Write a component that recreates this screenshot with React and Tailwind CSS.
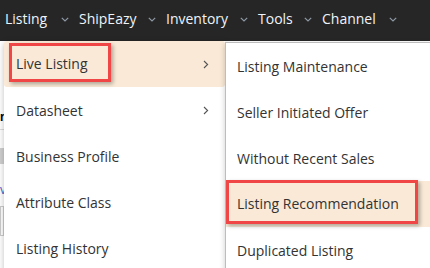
import React from "react";

const font = { fontFamily: '"Open Sans", "Noto Sans", Arial, sans-serif' };

function Chevron() {
  return (
    <svg width="8" height="5" viewBox="0 0 8 5" className="mt-[1px]" fill="none">
      <path d="M0.8 0.8 L4 4 L7.2 0.8" stroke="#8e9aa6" strokeWidth="1.2" />
    </svg>
  );
}

function Right() {
  return (
    <svg width="6" height="9" viewBox="0 0 6 9" fill="none">
      <path d="M1 1 L4.6 4.5 L1 8" stroke="#555" strokeWidth="1.1" />
    </svg>
  );
}

const navItems = [
  { label: "Listing", w: "w-[56px]" },
  { label: "ShipEazy", w: "w-[69px]" },
  { label: "Inventory", w: "w-[74px]" },
  { label: "Tools", w: "w-[46px]" },
  { label: "Channel", w: "w-[67px]" },
];

const rightItems = [
  "Listing Maintenance",
  "Seller Initiated Offer",
  "Without Recent Sales",
  "Listing Recommendation",
  "Duplicated Listing",
];

const redBox = "border-[3px] border-[#f04646] shadow-[2px_2px_4px_rgba(0,0,0,0.3)]";

export default function App() {
  return (
    <div className="w-[430px] h-[268px] overflow-hidden bg-white flex flex-col" style={font}>
      <nav className="h-[41px] shrink-0 bg-[#262626] flex items-center gap-[10px] pl-[5px] pb-[3px]">
        {navItems.map((n) => (
          <div key={n.label} className="flex items-center">
            <span className={`${n.w} text-[14px] text-[#eef4fa] leading-none`}>{n.label}</span>
            <Chevron />
          </div>
        ))}
      </nav>

      <div className="flex flex-1">
        {/* background page fragment */}
        <div className="w-[4px] shrink-0 flex flex-col overflow-hidden pt-[70px] bg-white">
          <div className="h-[14px] text-[12px] font-bold text-black leading-none" style={{ fontFamily: "Arial, sans-serif" }}>r</div>
          <div className="h-px bg-[#ddd] mt-[4px]" />
          <div className="h-[16px] bg-[#cfcfcf] mt-[18px]" />
          <div className="h-[14px] text-[12px] text-[#3366cc] leading-none mt-[20px]">v</div>
          <div className="h-[30px] border border-[#ccc] mt-[8px]" />
        </div>

        {/* left dropdown */}
        <div className="w-[221px] shrink-0 flex flex-col bg-white shadow-[0_2px_6px_rgba(0,0,0,0.25)] rounded-tl-[3px] z-10">
          <div className="h-[46px] bg-[#f9e9d6] rounded-[3px] flex items-start justify-between pt-[2px] pl-[5px] pr-[16px]">
            <div className={`w-[102px] h-[39px] ${redBox} flex items-center pl-[4px] pt-[1px] text-[14px] text-[#333]`}>
              Live Listing
            </div>
            <div className="h-[42px] flex items-center">
              <Right />
            </div>
          </div>
          <div className="h-[46px] flex items-center justify-between pl-[12px] pr-[16px] text-[14px] text-[#333]">
            <span>Datasheet</span>
            <Right />
          </div>
          {["Business Profile", "Attribute Class", "Listing History"].map((t) => (
            <div key={t} className="h-[46px] flex items-center pl-[12px] text-[14px] text-[#333]">
              {t}
            </div>
          ))}
        </div>

        {/* right submenu */}
        <div className="flex-1 mt-px flex flex-col bg-white border-l border-t border-[#bdbdbd] shadow-[0_2px_6px_rgba(0,0,0,0.2)] z-20">
          {rightItems.map((t, i) =>
            i === 3 ? (
              <div key={t} className="h-[46px] shrink-0 bg-[#f9e9d6] flex items-start">
                <div className={`w-[192px] h-[44px] -mt-[1px] ${redBox} flex items-center pl-[8px] pt-[2px] text-[14px] text-[#333]`}>
                  {t}
                </div>
              </div>
            ) : (
              <div key={t} className="h-[46px] shrink-0 flex items-center pl-[11px] text-[14px] text-[#333]">
                {t}
              </div>
            )
          )}
        </div>
      </div>
    </div>
  );
}
